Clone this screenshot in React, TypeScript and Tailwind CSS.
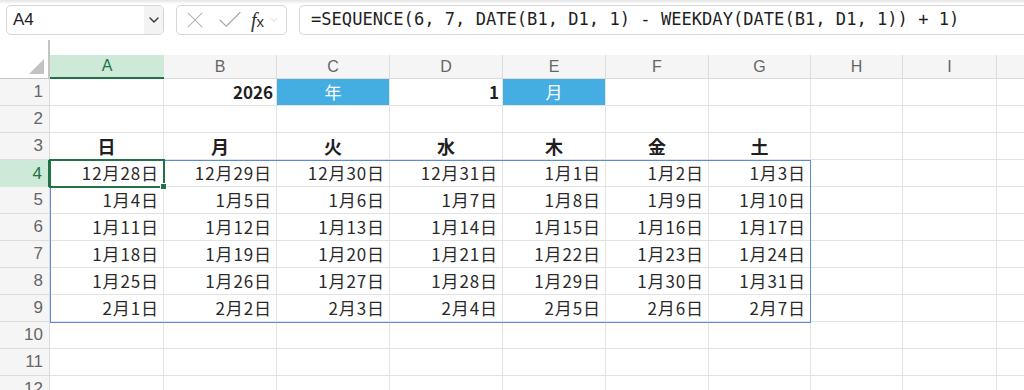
import React from "react";
import { ChevronDown, X, Check } from "lucide-react";

const cols = ["A", "B", "C", "D", "E", "F", "G", "H", "I", "J"];
const widths = [114, 113, 113, 113, 103, 103, 102, 92, 94, 120];

const start = new Date(2025, 11, 28);
const dates: string[][] = [];
for (let r = 0; r < 6; r++) {
  const row: string[] = [];
  for (let c = 0; c < 7; c++) {
    const d = new Date(start.getTime());
    d.setDate(start.getDate() + r * 7 + c);
    row.push(`${d.getMonth() + 1}月${d.getDate()}日`);
  }
  dates.push(row);
}

const days = ["日", "月", "火", "水", "木", "金", "土"];

type CellSpec = { text?: string; cls?: string };

function getCell(row: number, col: number): CellSpec {
  if (row === 1) {
    if (col === 1) return { text: "2026", cls: "justify-end font-bold pr-[3px]" };
    if (col === 2) return { text: "年", cls: "justify-center bg-[#44aee2] text-white" };
    if (col === 3) return { text: "1", cls: "justify-end font-bold pr-[3px]" };
    if (col === 4) return { text: "月", cls: "justify-center bg-[#44aee2] text-white" };
  }
  if (row === 3 && col < 7) return { text: days[col], cls: "justify-center font-bold text-[18px]" };
  if (row >= 4 && row <= 9 && col < 7)
    return { text: dates[row - 4][col], cls: "justify-end pr-[4px] tracking-[0.9px] text-[#2a2a2a]" };
  return {};
}

export default function App() {
  const rows = Array.from({ length: 12 }, (_, i) => i + 1);
  return (
    <div
      className="w-[1024px] h-[390px] overflow-hidden bg-white relative text-[#1f1f1f]"
      style={{ fontFamily: '"Noto Sans CJK JP", "Noto Sans", sans-serif' }}
    >
      {/* top shadow */}
      <div className="absolute top-0 left-0 right-0 h-[4px] bg-gradient-to-b from-[#e4e4e4] to-white" />
      {/* formula bar */}
      <div className="flex items-center h-[35px] pt-[5px] pl-[6px] gap-[12px]">
        <div className="flex h-[30px] w-[158px] border border-[#d6d6d6] rounded-[5px] overflow-hidden bg-white">
          <div className="flex-1 flex items-center pl-[6px] text-[17px] text-[#222]" style={{ fontFamily: '"Liberation Sans", Arial, sans-serif' }}>
            A4
          </div>
          <div className="w-[19px] bg-[#f3f3f3] flex items-center justify-center">
            <ChevronDown size={16} strokeWidth={2} color="#333" />
          </div>
        </div>
        <div className="flex items-center h-[30px] w-[111px] border border-[#d6d6d6] rounded-[5px] bg-white">
          <X size={28} strokeWidth={0.9} color="#a8a8a8" className="ml-[4px] shrink-0" />
          <Check size={30} strokeWidth={0.85} color="#a8a8a8" className="ml-[6px] shrink-0" />
          <span className="ml-[6px] text-[20px] text-[#333] italic leading-none" style={{ fontFamily: '"Liberation Serif", serif' }}>
            f<span className="text-[15px] not-italic" style={{ fontFamily: '"Liberation Sans", sans-serif' }}>x</span>
          </span>
          <ChevronDown size={10} strokeWidth={1.5} color="#bbb" className="ml-[5px] shrink-0" />
        </div>
        <div
          className="flex-1 flex items-center h-[30px] border border-[#d6d6d6] border-r-0 rounded-l-[5px] pl-[11px] text-[#1f1f1f] whitespace-nowrap"
          style={{ fontFamily: '"DejaVu Sans Mono", "Liberation Mono", monospace', fontSize: "17.1px" }}
        >
          =SEQUENCE(6, 7, DATE(B1, D1, 1) - WEEKDAY(DATE(B1, D1, 1)) + 1)
        </div>
      </div>
      {/* spacer with splitter */}
      <div className="h-[20px] flex">
        <div className="w-[50px] h-[15px] mt-[5px] border-r-2 border-[#c4c4c4]" />
      </div>
      {/* grid */}
      <div className="relative">
        {/* header row */}
        <div className="flex h-[24px]">
          <div className="w-[50px] shrink-0 relative bg-white border-r-2 border-b border-[#c4c4c4]">
            <div
              className="absolute right-[4px] bottom-[4px] w-[15px] h-[15px] bg-[#c2c2c2]"
              style={{ clipPath: "polygon(100% 0, 100% 100%, 0 100%)" }}
            />
          </div>
          {cols.map((c, i) => (
            <div
              key={c}
              className={
                i === 0
                  ? "shrink-0 flex items-center justify-center bg-[#cde9d7] text-[#217346] border-b-2 border-[#217346] text-[16px]"
                  : "shrink-0 flex items-center justify-center bg-[#f5f5f5] text-[#666] border-r border-b border-[#dcdcdc] text-[16px]"
              }
              style={{ width: widths[i], fontFamily: '"Liberation Sans", Arial, sans-serif' }}
            >
              {i < 9 ? c : ""}
            </div>
          ))}
        </div>
        {rows.map((r) => (
          <div key={r} className="flex h-[27px]">
            <div
              className={
                r === 4
                  ? "w-[50px] shrink-0 flex items-center justify-end pr-[6px] bg-[#cde9d7] text-[#217346] border-r-2 border-[#217346] text-[17px]"
                  : "w-[50px] shrink-0 flex items-center justify-end pr-[6px] bg-[#f5f5f5] text-[#666] border-r border-b border-[#dcdcdc] text-[17px]"
              }
              style={{ fontFamily: '"Liberation Sans", Arial, sans-serif' }}
            >
              {r}
            </div>
            {cols.map((c, i) => {
              const cell = getCell(r, i);
              return (
                <div
                  key={c}
                  className={`shrink-0 flex items-center border-r border-b border-[#e3e3e3] text-[17px] whitespace-nowrap ${cell.cls ?? ""}`}
                  style={{ width: widths[i] }}
                >
                  {cell.text}
                </div>
              );
            })}
          </div>
        ))}
        {/* range border A4:G9 */}
        <div className="absolute left-[50px] top-[105px] w-[761px] h-[163px] border-[1.5px] border-[#5b8ad8] pointer-events-none" />
        {/* active cell A4 */}
        <div className="absolute left-[49px] top-[104px] w-[116px] h-[29px] border-2 border-[#217346] pointer-events-none" />
        <div className="absolute left-[160px] top-[128px] w-[7px] h-[7px] bg-[#217346] border border-white pointer-events-none" />
      </div>
    </div>
  );
}
